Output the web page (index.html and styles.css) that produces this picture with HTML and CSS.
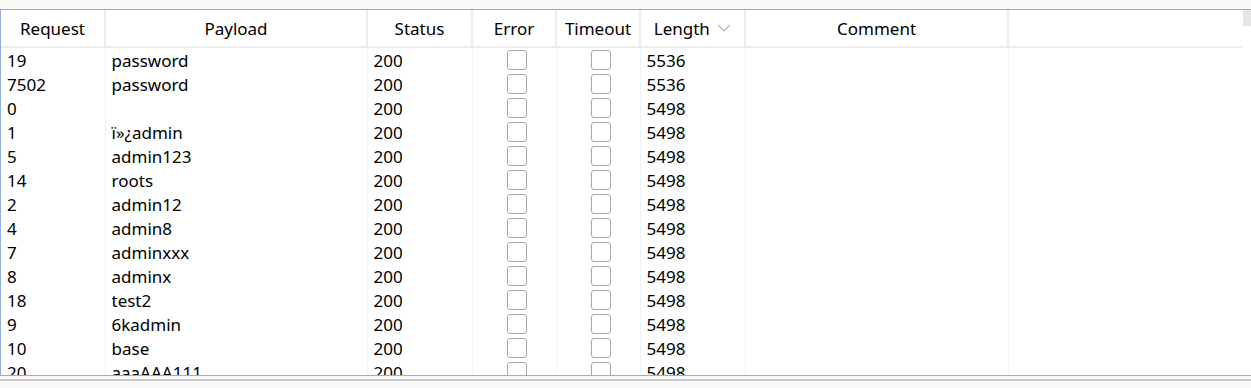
FILE: index.html
```html
<!DOCTYPE html>
<html lang="en">
<head>
  <meta charset="UTF-8" />
  <title>Intruder results</title>
  <link rel="stylesheet" href="styles.css">
</head>
<body>
  <div class="panel">
    <div class="grid-wrap">
      <table class="results">
        <colgroup>
          <col class="c-req"><col class="c-payload"><col class="c-status"><col class="c-err">
          <col class="c-timeout"><col class="c-len"><col class="c-comment"><col>
        </colgroup>
        <thead>
          <tr>
            <th>Request</th>
            <th>Payload</th>
            <th>Status</th>
            <th>Error</th>
            <th>Timeout</th>
            <th class="sorted">Length
              <svg class="sort-icon" viewBox="0 0 14 8"><path d="M1 1l6 6 6-6" fill="none" stroke="#b4b4b4" stroke-width="1.2"/></svg>
            </th>
            <th>Comment</th>
            <th></th>
          </tr>
        </thead>
        <tbody id="rows"></tbody>
      </table>
    </div>
    <div class="vscroll"><div class="thumb"></div></div>
  </div>
  <div class="statusbar"></div>

  <script>
    // request, payload, status, length
    const results = [
      [19, 'password', 200, 5536],
      [7502, 'password', 200, 5536],
      [0, '', 200, 5498],
      [1, 'ï»¿admin', 200, 5498],
      [5, 'admin123', 200, 5498],
      [14, 'roots', 200, 5498],
      [2, 'admin12', 200, 5498],
      [4, 'admin8', 200, 5498],
      [7, 'adminxxx', 200, 5498],
      [8, 'adminx', 200, 5498],
      [18, 'test2', 200, 5498],
      [9, '6kadmin', 200, 5498],
      [10, 'base', 200, 5498],
      [20, 'aaaAAA111', 200, 5498]
    ];

    const tbody = document.getElementById('rows');
    results.forEach(r => {
      const tr = document.createElement('tr');
      tr.innerHTML =
        `<td>${r[0]}</td><td>${r[1]}</td><td>${r[2]}</td>` +
        `<td class="chk"><span class="box"></span></td>` +
        `<td class="chk"><span class="box"></span></td>` +
        `<td>${r[3]}</td><td></td><td></td>`;
      tbody.appendChild(tr);
    });
  </script>
</body>
</html>
```

FILE: styles.css
```css
body {
  margin: 0;
  background: #f9f9f9;
  font-family: 'Noto Sans', 'Open Sans', sans-serif;
  font-size: 17px;
  color: #000;
}
.panel {
  margin-top: 9px;
  height: 367px;
  box-sizing: border-box;
  border-top: 1px solid #8fb0d8;
  border-left: 1px solid #8fb0d8;
  border-bottom: 1px solid #8fb0d8;
  background: #fff;
  display: flex;
}
.grid-wrap {
  flex: 1;
  overflow: hidden;
}
.vscroll {
  width: 8px;
  background: #fff;
}
.thumb {
  height: 16px;
  background: #e6e6e6;
}
.results {
  width: 100%;
  table-layout: fixed;
  border-collapse: collapse;
}
.c-req { width: 104px; }
.c-payload { width: 262px; }
.c-status { width: 105px; }
.c-err { width: 84px; }
.c-timeout { width: 84px; }
.c-len { width: 105px; }
.c-comment { width: 263px; }

th {
  height: 35px;
  padding: 1px 0 0;
  font-weight: normal;
  text-align: center;
  border-right: 2px solid #ececec;
  border-bottom: 2px solid #ececec;
  white-space: nowrap;
}
th:last-child { border-right: none; }
.sort-icon {
  width: 14px;
  height: 8px;
  margin-left: 3px;
  vertical-align: 3px;
}
td {
  height: 24px;
  padding: 0 0 0 6px;
  border-right: 1px solid #f2f2f2;
  white-space: nowrap;
  overflow: hidden;
  line-height: 24px;
}
td:last-child { border-right: none; }
tbody tr:first-child td { padding-top: 1px; }
.chk {
  padding: 0 0 0 6px;
  text-align: center;
}
.box {
  display: inline-block;
  width: 18px;
  height: 18px;
  margin-top: 1px;
  border: 1px solid #a8a8a8;
  border-radius: 3px;
  vertical-align: top;
}
.statusbar {
  margin-top: 3px;
  border-top: 2px solid #c9c9c9;
  height: 7px;
}
```
